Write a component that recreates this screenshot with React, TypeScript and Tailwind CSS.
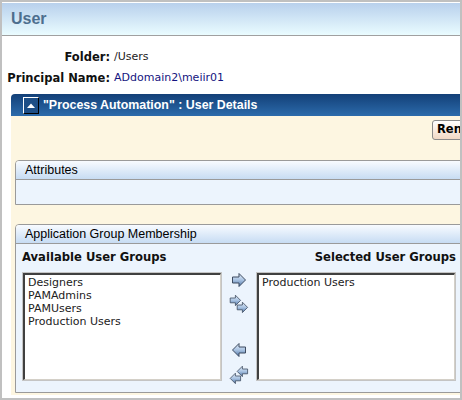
import React from "react";

const ARROW = "M1.5 5 H8 V1.5 L14.5 8 L8 14.5 V11 H1.5 Z";

function ArrowShape({ gid, left, x = 0, y = 0, s = 1 }: { gid: string; left?: boolean; x?: number; y?: number; s?: number }) {
  const flip = left ? "translate(16 0) scale(-1 1)" : "";
  return (
    <g transform={`translate(${x} ${y}) scale(${s})`}>
      <g transform={flip}>
        <path d={ARROW} fill={`url(#${gid})`} stroke="#3d4b60" strokeWidth="1" strokeLinejoin="miter" />
      </g>
    </g>
  );
}

function Grad({ gid }: { gid: string }) {
  return (
    <defs>
      <linearGradient id={gid} x1="0" y1="0" x2="0" y2="1">
        <stop offset="0" stopColor="#e4eef9" />
        <stop offset="0.5" stopColor="#a9c3e2" />
        <stop offset="1" stopColor="#4f74a6" />
      </linearGradient>
    </defs>
  );
}

function Arrow({ gid, left }: { gid: string; left?: boolean }) {
  return (
    <svg width="16" height="16" viewBox="0 0 16 16">
      <Grad gid={gid} />
      <ArrowShape gid={gid} left={left} />
    </svg>
  );
}

function DoubleArrow({ gid, left }: { gid: string; left?: boolean }) {
  return (
    <svg width="20" height="20" viewBox="0 0 20 20">
      <Grad gid={gid} />
      {left ? (
        <>
          <ArrowShape gid={gid} left x={7} y={0} s={0.8} />
          <ArrowShape gid={gid} left x={0} y={7} s={0.8} />
        </>
      ) : (
        <>
          <ArrowShape gid={gid} x={0} y={0} s={0.8} />
          <ArrowShape gid={gid} x={7} y={7} s={0.8} />
        </>
      )}
    </svg>
  );
}

function ListBox({ items }: { items: string[] }) {
  return (
    <div className="w-[200px] h-[109px] border border-[#c4c4c4] bg-white">
      <div className="h-full border-t-2 border-l-2 border-t-[#404040] border-l-[#404040] border-r border-b border-r-[#d4d0c8] border-b-[#d4d0c8] pl-[3px] pt-[1px] font-['DejaVu_Sans',Verdana,sans-serif] text-[11px] leading-[13px] text-[#222]">
        {items.map((item) => (
          <div key={item}>{item}</div>
        ))}
      </div>
    </div>
  );
}

export default function App() {
  return (
    <div className="w-[462px] h-[400px] overflow-hidden border-2 border-[#c0c0c0] bg-white font-['Liberation_Sans',Arial,sans-serif]">
      {/* page title */}
      <div className="h-[34px] border-t border-t-white border-b border-b-[#a0a0a0] bg-linear-to-b from-[#b8d0ec] to-[#eafcff] flex items-center pl-[9px]">
        <span className="text-[16px] font-bold text-[#4d6e8e]">User</span>
      </div>

      {/* folder / principal */}
      <div className="pt-[11px] grid grid-cols-[108px_1fr] gap-x-[4px] font-['DejaVu_Sans',Verdana,sans-serif] text-[11px]">
        <div className="h-[21px] flex items-center justify-end font-bold text-[11.5px] text-[#111] whitespace-nowrap">Folder:</div>
        <div className="h-[21px] flex items-center text-[#222]">/Users</div>
        <div className="h-[21px] flex items-center justify-end font-bold text-[11.5px] text-[#111] whitespace-nowrap">Principal Name:</div>
        <div className="h-[21px] flex items-center text-[#141480]">ADdomain2\meiir01</div>
      </div>

      {/* details panel */}
      <div className="ml-[9px] mt-[5px] w-[480px]">
        <div className="h-[22px] rounded-tl-[4px] bg-linear-to-b from-[#134078] to-[#2c6bab] flex items-center">
          <div className="ml-[12px] w-[16px] h-[17px] border border-t-white border-l-white border-r-black border-b-black bg-[#1d4e86] flex items-center justify-center">
            <svg width="8" height="5" viewBox="0 0 8 5">
              <path d="M0 5 L4 0.5 L8 5 Z" fill="#fff" />
            </svg>
          </div>
          <span className="ml-[4px] text-white font-bold text-[12.4px] whitespace-nowrap">"Process Automation" : User Details</span>
        </div>

        <div className="bg-[#fdf6e1] px-[4px] pt-[4px] pb-[2px]">
          <div className="flex pl-[417px]">
            <button className="h-[20px] px-[4px] rounded-[3px] border border-[#8a8a8a] bg-linear-to-b from-white to-[#f1d8c4] font-['DejaVu_Sans',Verdana,sans-serif] text-[11.5px] font-bold text-black whitespace-nowrap">
              Rename
            </button>
          </div>

          {/* attributes */}
          <div className="mt-[20px] border border-[#9a9a9a] rounded-tl-[4px] overflow-hidden">
            <div className="h-[19px] border-b border-b-[#9a9a9a] bg-linear-to-b from-[#f8fbff] to-[#c7dcf3] flex items-center pl-[9px] text-[12.5px] text-black">
              Attributes
            </div>
            <div className="h-[24px] bg-[#ecf4fd]" />
          </div>

          {/* group membership */}
          <div className="mt-[19px] border border-[#9a9a9a] rounded-tl-[4px] overflow-hidden">
            <div className="h-[19px] border-b border-b-[#9a9a9a] bg-linear-to-b from-[#f8fbff] to-[#c7dcf3] flex items-center pl-[9px] text-[12.5px] text-black">
              Application Group Membership
            </div>
            <div className="h-[148px] bg-[#ecf4fd] pl-[6px] pt-[5px]">
              <div className="grid grid-cols-[200px_34px_200px] h-[16px] items-center font-['DejaVu_Sans',Verdana,sans-serif] text-[11.6px] font-bold text-[#111]">
                <div className="whitespace-nowrap">Available User Groups</div>
                <div />
                <div className="text-right whitespace-nowrap">Selected User Groups</div>
              </div>
              <div className="mt-[7px] flex">
                <ListBox items={["Designers", "PAMAdmins", "PAMUsers", "Production Users"]} />
                <div className="w-[34px] flex flex-col items-center">
                  <Arrow gid="g1" />
                  <div className="mt-[6px]">
                    <DoubleArrow gid="g2" />
                  </div>
                  <div className="mt-[28px]">
                    <Arrow gid="g3" left />
                  </div>
                  <div className="mt-[7px]">
                    <DoubleArrow gid="g4" left />
                  </div>
                </div>
                <ListBox items={["Production Users"]} />
              </div>
            </div>
          </div>
        </div>
      </div>
    </div>
  );
}
